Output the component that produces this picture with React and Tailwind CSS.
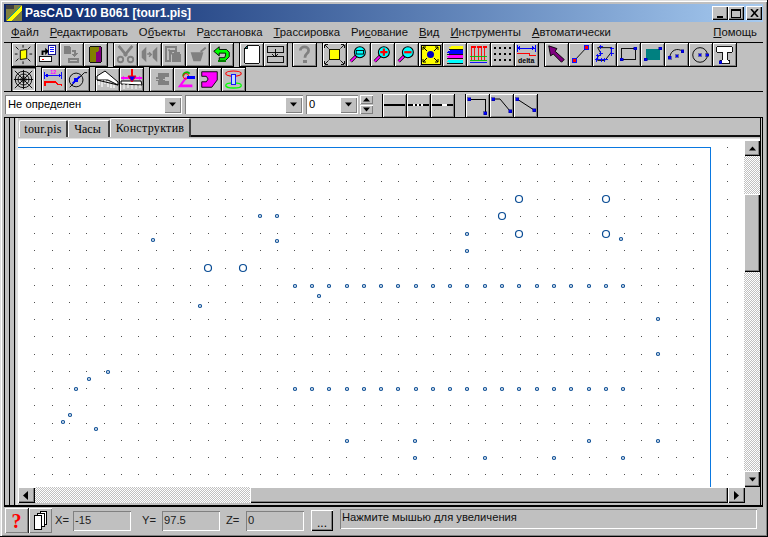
import React from "react";

const S = "shadow-[inset_1px_1px_0_#fff,inset_-1px_-1px_0_#808080]";
const SUNK = "shadow-[inset_1px_1px_0_#808080,inset_-1px_-1px_0_#fff]";
const SANS = "font-['Liberation_Sans',Arial,sans-serif]";
const G = "#808080";

function I({ children, full }) {
  const s = full ? 23 : 21;
  return (
    <svg width={s} height={s} viewBox="0 0 23 23" shapeRendering="crispEdges">
      {children}
    </svg>
  );
}
const Pt = ({ x, y }) => <rect x={x - 1.5} y={y - 1.5} width="3" height="3" fill="#0000ff" stroke="#000080" strokeWidth="0.5" />;
const Mag = ({ children }) => (
  <g shapeRendering="auto">
    <path d="M3 19 L9 13" stroke="#000" strokeWidth="3.4" />
    <path d="M3 19 L9 13" stroke="#ff00ff" strokeWidth="2" />
    <circle cx="13" cy="9" r="6" fill="#00ffff" stroke="#000" strokeWidth="1.2" />
    {children}
  </g>
);

const icons = {
  sun: (
    <I>
      <path d="M8 7 L15 6 L15 16 L8 17 Z" fill="#ffff00" stroke="#000" shapeRendering="auto" />
      <path d="M11 1v3M11 19v3M2 11h3M18 11h3M3 3l3 3M19 3l-3 3M3 19l3-3M19 19l-3-3" stroke="#000" shapeRendering="auto" />
    </I>
  ),
  exp: (
    <I>
      <path d="M5 12 V7 H9 V4 L13 8 L9 12 V9 H7 V12 Z" fill="#000" shapeRendering="auto" />
      <rect x="13" y="2" width="7" height="9" fill="#fff" stroke="#000080" />
      <path d="M14 4h5M14 6h5M14 8h5" stroke="#0000ff" />
      <rect x="3" y="14" width="13" height="5" fill="#fff" stroke="#000" />
      <rect x="5" y="16" width="3" height="2" fill="#ff0000" />
    </I>
  ),
  imp: (
    <I>
      <path d="M3 2 H9 L11 4 V11 H3 Z" fill={G} />
      <path d="M12 7 H16 V10 H19 L15 14 L12 11 H14 V9 H12 Z" fill={G} />
      <rect x="8" y="15" width="12" height="6" fill={G} />
      <rect x="10" y="17" width="8" height="2" fill="#c0c0c0" />
    </I>
  ),
  door: (
    <I>
      <path d="M5 3 H18 V20 H5 Z" fill="#808000" stroke="#000" />
      <path d="M12 20 V9 L15 8 V3 H18 V20 Z" fill="#800080" />
    </I>
  ),
  cut: (
    <I>
      <path d="M4 2 L13 13 M19 2 L10 13" stroke={G} strokeWidth="3" shapeRendering="auto" />
      <circle cx="6" cy="17" r="3" fill="none" stroke={G} strokeWidth="2" shapeRendering="auto" />
      <circle cx="17" cy="17" r="3" fill="none" stroke={G} strokeWidth="2" shapeRendering="auto" />
    </I>
  ),
  flip: (
    <I>
      <path d="M3 8 L8 3 V20 L3 15 Z M20 3 V20 L15 15 V8 Z" fill={G} shapeRendering="auto" />
      <path d="M9 11 H13 M11 9 L13.5 11.5 L11 14" stroke={G} strokeWidth="1.5" fill="none" shapeRendering="auto" />
    </I>
  ),
  paste: (
    <I>
      <path d="M3 3 H14 V8 H8 V19 H3 Z" fill="none" stroke={G} strokeWidth="2" />
      <path d="M12 9 H18 L20 12 V20 H10 V12 Z" fill={G} />
      <path d="M6 6 L11 12" stroke={G} strokeWidth="2" shapeRendering="auto" />
    </I>
  ),
  pot: (
    <I>
      <path d="M4 9 H18 L15 19 H7 Z" fill={G} shapeRendering="auto" />
      <path d="M14 8 L20 3 L21 5 L16 9 Z" fill={G} shapeRendering="auto" />
    </I>
  ),
  undo: (
    <I>
      <path d="M3 8 L9 3 V6 H17 L20 9 V14 L16 18 H9 V15 H15 L16 12 V10 H9 V13 Z" fill="#00ff00" stroke="#000" shapeRendering="auto" />
      <path d="M8 19 H16" stroke="#008000" strokeWidth="2" />
    </I>
  ),
  page: (
    <I>
      <path d="M7 2 H20 V21 H4 V5 Z" fill="#fff" stroke="#000" />
      <path d="M4 5 L7 2 V5 Z" fill="#008080" stroke="#000" />
    </I>
  ),
  move: (
    <I>
      <rect x="3" y="3" width="17" height="6" fill="none" stroke="#000" />
      <rect x="3" y="14" width="17" height="6" fill="none" stroke="#000" />
      <path d="M11 6 V14 M8 11 L11 14 L14 11" stroke="#000" fill="none" />
    </I>
  ),
  q: (
    <I>
      <path d="M7 7 C7 2 16 2 16 7 C16 11 12 10 12 15" fill="none" stroke={G} strokeWidth="3" shapeRendering="auto" />
      <rect x="10" y="17" width="4" height="4" fill={G} />
    </I>
  ),
  fit: (
    <I>
      <rect x="6" y="6" width="11" height="11" fill="#ffff00" stroke="#000" />
      <path d="M1 1 L5 5 M22 1 L18 5 M1 22 L5 18 M22 22 L18 18" stroke="#000" shapeRendering="auto" />
      <path d="M1 1h3M1 1v3M22 1h-3M22 1v3M1 22h3M1 22v-3M22 22h-3M22 22v-3" stroke="#000" />
    </I>
  ),
  zw: <I><Mag><rect x="9" y="7" width="8" height="4" fill="none" stroke="#000" /></Mag></I>,
  zp: <I><Mag><path d="M9 9 H17 M13 5 V13" stroke="#ff0000" strokeWidth="2.4" /></Mag></I>,
  zm: <I><Mag><path d="M9 9 H17" stroke="#ff0000" strokeWidth="2.4" /></Mag></I>,
  yel: (
    <I full>
      <rect x="2" y="2" width="19" height="19" fill="#ffff00" stroke="#000" />
      <circle cx="11.5" cy="11.5" r="3.5" fill="#0000c0" shapeRendering="auto" />
      <path d="M4 4 L8 8 M19 4 L15 8 M4 19 L8 15 M19 19 L15 15 M4 4h3M4 4v3M19 4h-3M19 4v3M4 19h3M4 19v-3M19 19h-3M19 19v-3" stroke="#000" shapeRendering="auto" />
    </I>
  ),
  lay: (
    <I>
      <path d="M9 2 H21 V6 H9 L5 4 Z" fill="#ffff00" />
      <path d="M7 7 H21 V11 H7 L3 9 Z" fill="#0000ff" />
      <path d="M7 12 H21 V16 H7 L3 14 Z" fill="#ff00ff" />
      <path d="M7 17 H21 V21 H7 L3 19 Z" fill="#00ffff" />
      <path d="M5 6h16M3 11h18M3 16h18M3 21h18" stroke="#000" />
    </I>
  ),
  comb: (
    <I>
      <path d="M3 3h6M10 3h5M16 3h5" stroke="#ff0000" strokeWidth="2" />
      <path d="M4 3v15M7 3v15M12 3v15M15 3v15M18 3v15" stroke="#ff0000" />
      <path d="M2 14h19M2 18h19" stroke="#00c000" />
      <path d="M2 20h19" stroke="#0000ff" />
    </I>
  ),
  dots: (
    <I full>
      {[4, 9, 14, 19].flatMap((x) =>
        [5, 11, 17].map((y) => <rect key={x + "-" + y} x={x - 1} y={y - 1} width="2" height="2" fill="#000" />)
      )}
    </I>
  ),
  delta: (
    <I full>
      <path d="M2 2 V9 M20 2 V9 M2 5 H20" stroke="#0000ff" />
      <path d="M2 5l3-2v4zM20 5l-3-2v4z" fill="#0000ff" />
      <path d="M2 10 H14 V12 H21" fill="none" stroke="#ff0000" />
      <text x="3" y="20" fontSize="7" fontWeight="700" fontFamily="Liberation Sans, sans-serif" fill="#000" shapeRendering="auto">delta</text>
    </I>
  ),
  arrow: (
    <I>
      <path d="M3 2 L12 5 L10 8 L20 17 L17 20 L8 11 L5 13 Z" fill="#800080" stroke="#000" shapeRendering="auto" />
    </I>
  ),
  line: (
    <I>
      <path d="M5 18 L18 4" stroke="#000" shapeRendering="auto" />
      <rect x="3" y="16" width="4" height="4" fill="#ff0000" stroke="#0000ff" />
      <rect x="16" y="2" width="4" height="4" fill="#ff0000" stroke="#0000ff" />
    </I>
  ),
  poly: (
    <I>
      <path d="M4 4 H19 L19 9 L12 18 H4 L4 14 L8 11 Z" fill="none" stroke="#000" shapeRendering="auto" />
      {[[7, 3], [19, 5], [19, 10], [12, 17], [7, 10], [3, 17], [8, 17], [4, 13]].map(([x, y]) => (
        <path key={x + "," + y} d={`M${x - 2} ${y}h5M${x} ${y - 2}v5`} stroke="#0000ff" />
      ))}
    </I>
  ),
  rect: (
    <I>
      <rect x="4" y="5" width="15" height="12" fill="none" stroke="#000" />
      <Pt x={4} y={17} />
      <Pt x={19} y={5} />
    </I>
  ),
  fill: (
    <I>
      <rect x="4" y="5" width="16" height="12" fill="#008080" />
      <Pt x={4} y={17} />
      <Pt x={20} y={5} />
    </I>
  ),
  arc: (
    <I>
      <path d="M4 15 C5 6 13 4 18 8" fill="none" stroke="#000" shapeRendering="auto" />
      <Pt x={4} y={15} />
      <Pt x={18} y={8} />
      <Pt x={12} y={13} />
    </I>
  ),
  circ: (
    <I>
      <circle cx="11" cy="12" r="8" fill="none" stroke="#000" shapeRendering="auto" />
      <Pt x={11} y={12} />
      <Pt x={19} y={12} />
    </I>
  ),
  t: (
    <I>
      <path d="M3 3 H20 V9 H15 V18 H17 V21 H7 V18 H9 V9 H3 Z" fill="#fff" stroke="#000" strokeWidth="1" />
      <Pt x={7} y={20} />
    </I>
  ),
  web: (
    <I>
      <g fill="none" stroke="#000" shapeRendering="auto">
        <circle cx="11.5" cy="11.5" r="3" />
        <circle cx="11.5" cy="11.5" r="6" />
        <circle cx="11.5" cy="11.5" r="9" />
        <path d="M2 2 L21 21 M21 2 L2 21 M11.5 1 V22 M1 11.5 H22" />
      </g>
    </I>
  ),
  dim: (
    <I>
      <path d="M2 3 V11 M20 3 V11 M2 7 H20" stroke="#0000ff" />
      <path d="M2 7l3-2v4zM20 7l-3-2v4z" fill="#0000ff" />
      <text x="8" y="6" fontSize="6" fontWeight="700" fontFamily="Liberation Sans, sans-serif" fill="#ff00ff" shapeRendering="auto">12</text>
      <path d="M2 19 V14 H14 L16 17 H20 V19" fill="none" stroke="#ff0000" strokeWidth="1.6" />
    </I>
  ),
  cdim: (
    <I>
      <g shapeRendering="auto">
        <circle cx="10" cy="12" r="7.5" fill="none" stroke="#000" />
        <path d="M3 20 L19 4 H22" stroke="#000" fill="none" />
        <path d="M6 16 L14 8" stroke="#0000ff" strokeWidth="2" />
      </g>
      <rect x="8" y="10" width="4" height="4" fill="#0000ff" />
    </I>
  ),
  slab: (
    <I full>
      <g shapeRendering="auto">
        <path d="M1 8 L9 3 L22 14 V17 L12 12 L1 12 Z" fill="#fff" stroke="#000" />
        <path d="M3 12 V17 M6 12 V19 M9 12 V16 M12 13 V19 M15 15 V20 M18 16 V20" stroke="#fff" strokeWidth="1.2" />
        <path d="M1 12 L22 17" stroke="#000" />
      </g>
    </I>
  ),
  slab2: (
    <I full>
      <g shapeRendering="auto">
        <path d="M1 13 L21 13 L22 17 L1 16 Z" fill="#fff" stroke="#000" />
        <path d="M4 16 V21 M8 16 V20 M12 17 V21 M16 17 V21 M20 17 V20" stroke="#fff" />
        <path d="M1 10 H22" stroke="#ff00ff" strokeWidth="2" />
        <path d="M1 10l3-2v4zM22 10l-3-2v4z" fill="#ff00ff" />
        <path d="M12 1 V12" stroke="#ff0000" strokeWidth="2" />
        <path d="M8 8 H16 L12 14 Z" fill="#0000ff" stroke="#ff0000" />
      </g>
    </I>
  ),
  rem: (
    <I>
      <path d="M8 4 H20 V9 H15 V13 H20 V18 H8 V13 H4 V9 H8 Z" fill={G} />
      <path d="M3 11 H9 M3 11l2-2v4zM13 11 H20 M20 11l-2-2v4z" stroke="#c0c0c0" fill="#c0c0c0" />
    </I>
  ),
  ang: (
    <I>
      <g shapeRendering="auto">
        <path d="M3 20 L11 9 H14 L8 17 H19 V20 Z" fill="#ff00ff" />
        <path d="M9 8 A4 4 0 0 1 16 5" fill="none" stroke="#00c000" strokeWidth="2" />
        <circle cx="12" cy="8" r="3" fill="none" stroke="#ff0000" />
      </g>
      <rect x="13" y="8" width="9" height="3" fill="#0000ff" />
    </I>
  ),
  mag: (
    <I>
      <path d="M3 3 H20 V12 L14 20 H3 V14 H8 L10 11 L8 8 H3 Z" fill="#ff00ff" stroke="#000" shapeRendering="auto" />
    </I>
  ),
  spool: (
    <I>
      <g shapeRendering="auto">
        <ellipse cx="11.5" cy="5" rx="8.5" ry="2.8" fill="none" stroke="#ff0000" strokeWidth="1.2" />
        <ellipse cx="11.5" cy="18" rx="8.5" ry="2.8" fill="none" stroke="#00ff00" strokeWidth="1.4" />
      </g>
      <rect x="9" y="6" width="5" height="11" fill="#c0e0ff" stroke="#0000ff" />
    </I>
  ),
  ls1: <I full><rect x="1" y="10" width="21" height="2" fill="#000" /></I>,
  ls2: (
    <I full>
      <rect x="1" y="10" width="21" height="2" fill="#000" />
      <path d="M6 10h2v2H6zM10 10h2v2h-2zM14 10h2v2h-2z" fill="#fff" />
    </I>
  ),
  ls3: (
    <I full>
      <rect x="1" y="10" width="21" height="2" fill="#000" />
      <rect x="11" y="10" width="5" height="2" fill="#fff" />
    </I>
  ),
  n1: (
    <I full>
      <path d="M4 5 H19 V20" fill="none" stroke="#000" />
      <Pt x={3} y={5} />
      <Pt x={19} y={19} />
    </I>
  ),
  n2: (
    <I full>
      <path d="M3 5 H10 L20 17" fill="none" stroke="#000" shapeRendering="auto" />
      <Pt x={3} y={5} />
      <Pt x={20} y={17} />
    </I>
  ),
  n3: (
    <I full>
      <path d="M3 5 L20 16" fill="none" stroke="#000" shapeRendering="auto" />
      <Pt x={3} y={5} />
      <Pt x={20} y={16} />
    </I>
  ),
};

function Btn({ n, sunk }) {
  return (
    <div className={`w-[23px] h-[23px] flex items-center justify-center ${sunk ? "bg-[#c8c8c8] " + SUNK : "bg-[#c0c0c0] " + S}`}>
      {icons[n]}
    </div>
  );
}

function Group({ items, ml, first, last }) {
  return (
    <div
      className={`flex gap-px bg-black px-px ${first ? "" : "pt-px"} ${last ? "" : "pb-px"}`}
      style={{ marginLeft: ml }}
    >
      {items.map((n) => (
        <Btn key={n} n={n} sunk={n === "web"} />
      ))}
    </div>
  );
}

const menu = [
  ["", "Ф", "айл"],
  ["", "Р", "едактировать"],
  ["О", "б", "ъекты"],
  ["Р", "а", "сстановка"],
  ["", "Т", "рассировка"],
  ["Ри", "с", "ование"],
  ["", "В", "ид"],
  ["", "И", "нструменты"],
  ["", "А", "втоматически"],
];

function Arrow({ dir }) {
  if (dir === "up" || dir === "down") {
    return (
      <svg width="9" height="5" viewBox="0 0 9 5" className="mx-auto">
        <path d={dir === "down" ? "M1 0.5 H8 L4.5 4.5 Z" : "M1 4.5 H8 L4.5 0.5 Z"} fill="#000" />
      </svg>
    );
  }
  return (
    <svg width="9" height="9" viewBox="0 0 9 9" className="mx-auto">
      <path d={dir === "left" ? "M6 0 V9 L1 4.5 Z" : "M2 0 V9 L7 4.5 Z"} fill="#000" />
    </svg>
  );
}

function Combo({ w, text, ml }) {
  return (
    <div className={`h-[19px] flex bg-white ${SUNK} items-center pl-[3px] pr-px text-[11.2px] text-black`} style={{ width: w, marginLeft: ml }}>
      <span className="flex-1 truncate">{text}</span>
      <div className={`w-[17px] h-[16px] bg-[#c0c0c0] flex items-center ${S}`}>
        <Arrow dir="down" />
      </div>
    </div>
  );
}

function Tab({ children, active }) {
  return (
    <div
      className={`font-['Liberation_Serif',serif] text-black text-[12px] leading-none flex items-center justify-center border-t border-l border-t-white border-l-white border-r-2 border-r-[#404040] rounded-t-[2px] bg-[#c0c0c0] ${
        active ? "h-[19px] w-[81px] pb-[1px] tracking-[0.3px]" : "h-[17px] w-[49px] tracking-[0.2px]"
      }`}
    >
      {children}
    </div>
  );
}

const rowX = [295, 312, 329, 347, 364, 381, 398, 416, 433, 450, 467, 485, 502, 519, 537, 554, 571, 589, 606, 623];
const small = [
  [260, 216], [277, 216], [277, 241], [153, 240], [467, 234], [467, 251], [621, 239], [200, 306], [319, 296],
  [658, 319], [658, 354], [108, 372], [89, 379], [76, 389], [70, 415], [63, 422], [96, 429],
  [347, 441], [415, 441], [589, 441], [658, 441], [415, 458], [485, 458], [554, 458], [623, 458],
  ...rowX.map((x) => [x, 286]),
  ...rowX.map((x) => [x, 389]),
];
const large = [[519, 199], [502, 216], [519, 234], [606, 199], [606, 234], [208, 268], [243, 268]];

function Canvas() {
  const dots = [];
  for (let i = 0; i <= 40; i++) {
    for (let j = 0; j <= 19; j++) {
      dots.push([Math.round(34.3 + 17.33 * i), Math.round(147 + 17.22 * j)]);
    }
  }
  return (
    <svg width="726" height="348" viewBox="18 139 726 348" className="block">
      <g shapeRendering="crispEdges">
        {dots.map(([x, y]) => (
          <rect key={x + "_" + y} x={x} y={y} width="1" height="1" fill="#505050" />
        ))}
        <path d="M18 147.5 H710.5 V487" fill="none" stroke="#0a78e0" />
      </g>
      <g fill="#fff" stroke="#0a4c94" strokeWidth="1.2">
        {small.map(([x, y]) => (
          <circle key={x + "s" + y} cx={x} cy={y} r="1.5" />
        ))}
        {large.map(([x, y]) => (
          <circle key={x + "l" + y} cx={x} cy={y} r="3.5" />
        ))}
      </g>
    </svg>
  );
}

const CHECK = "bg-[repeating-conic-gradient(#c0c0c0_0_25%,#ffffff_0_50%)] bg-[length:2px_2px]";
const SB = `bg-[#c0c0c0] shadow-[inset_1px_1px_0_#fff,inset_-1px_-1px_0_#000,inset_-2px_-2px_0_#808080]`;

function Field({ label, value, lw }) {
  return (
    <div className="flex items-center text-[11.2px] text-[#202020]">
      <span style={{ width: lw }}>{label}</span>
      <div className={`w-[58px] h-[20px] bg-[#c0c0c0] pl-[2px] flex items-center ${SUNK}`}>{value}</div>
    </div>
  );
}

export default function App() {
  return (
    <div className={`${SANS} w-[768px] h-[537px] bg-[#c0c0c0] flex flex-col pt-[4px] pl-[4px] pr-[4px] pb-[2px] border-r border-b border-black overflow-hidden shadow-[inset_1px_1px_0_#dfdfdf,inset_2px_2px_0_#fff,inset_-1px_-1px_0_#808080]`}>
      {/* title */}
      <div className="h-[18px] shrink-0 flex items-center bg-gradient-to-r from-[#0a246a] to-[#a6caf0] pl-[2px] pr-px">
        <svg width="16" height="16" viewBox="0 0 16 16" shapeRendering="crispEdges">
          <rect width="16" height="16" fill="#808040" />
          <path d="M0 16 L16 0 V5 L5 16 Z" fill="#ffff00" />
          <path d="M0 0 H8 V4 H0 Z" fill="#404040" />
          <path d="M2 14 L14 2" stroke="#00a0a0" />
        </svg>
        <span className="ml-[3px] text-white font-bold text-[12px] leading-none">PasCAD V10 B061 [tour1.pis]</span>
        <div className="ml-auto flex items-center">
          {[0, 1].map((k) => (
            <div key={k} className={`w-[16px] h-[14px] bg-[#c0c0c0] ${SB} flex items-center justify-center`}>
              {k === 0 ? <div className="w-[6px] h-[2px] bg-black mt-[7px] -ml-[1px]" /> : <div className="w-[10px] h-[9px] border border-black border-t-2" />}
            </div>
          ))}
          <div className={`ml-[2px] w-[16px] h-[14px] ${SB} flex items-center justify-center`}>
            <svg width="9" height="8" viewBox="0 0 9 8">
              <path d="M1 0 L8 8 M8 0 L1 8" stroke="#000" strokeWidth="1.6" />
            </svg>
          </div>
        </div>
      </div>
      {/* menu */}
      <div className="h-[20px] shrink-0 flex items-center pl-[7px] pr-[6px] gap-[11px] text-[11.3px] text-[#101010]">
        {menu.map(([a, b, c]) => (
          <span key={a + b + c}>
            {a}
            <u>{b}</u>
            {c}
          </span>
        ))}
        <span className="ml-auto">
          <u>П</u>омощь
        </span>
      </div>
      {/* toolbars */}
      <div className="h-[50px] shrink-0 border-t border-b border-black flex flex-col pl-[7px]">
        <div className="flex h-[24px]">
          <Group first ml={0} items={["sun", "exp", "imp", "door"]} />
          <Group first ml={5} items={["cut", "flip", "paste", "pot", "undo"]} />
          <Group first ml={5} items={["page", "move"]} />
          <Group first ml={4} items={["q"]} />
          <Group first ml={5} items={["fit", "zw", "zp", "zm", "yel", "lay", "comb", "dots", "delta"]} />
          <Group first ml={5} items={["arrow", "line", "poly", "rect", "fill", "arc", "circ", "t"]} />
        </div>
        <div className="flex h-[24px]">
          <Group last ml={0} items={["web"]} />
          <Group last ml={5} items={["dim", "cdim"]} />
          <Group last ml={5} items={["slab", "slab2"]} />
          <Group last ml={5} items={["rem", "ang", "mag", "spool"]} />
        </div>
      </div>
      {/* combos */}
      <div className="h-[26px] shrink-0 border-b border-black flex items-center pl-[1px]">
        <Combo w={177} text="Не определен" />
        <Combo w={118} ml={3} text="" />
        <Combo w={52} ml={3} text="0" />
        <div className="ml-[2px] w-[13px] h-[19px] flex flex-col gap-px">
          <div className={`flex-1 flex items-center ${S}`}><Arrow dir="up" /></div>
          <div className={`flex-1 flex items-center ${S}`}><Arrow dir="down" /></div>
        </div>
        <div className="ml-[9px] self-end">
          <Group last first ml={0} items={["ls1", "ls2", "ls3"]} />
        </div>
        <div className="ml-[10px] self-end">
          <Group last first ml={0} items={["n1", "n2", "n3"]} />
        </div>
      </div>
      {/* body */}
      <div className="flex-1 min-h-0 flex">
        {/* rebars */}
        <div className="w-[14px] shrink-0 flex">
          <div className="w-[5px] border-l border-black" />
          <div className="w-[5px] border-l border-black border-r-0" />
          <div className="w-[4px] border-l border-black border-r-2 border-r-[#e0e0e0]" />
        </div>
        <div className="flex-1 min-w-0 flex flex-col">
          {/* tabs */}
          <div className="h-[19px] shrink-0 flex items-end pl-px">
            <Tab>tour.pis</Tab>
            <div className="h-[17px] w-[42px] border-t border-l border-t-white border-l-white border-r-2 border-r-[#404040] font-['Liberation_Serif',serif] text-[12px] leading-none text-black flex items-center justify-center pr-[2px]">Часы</div>
            <Tab active>Конструктив</Tab>
            <div className="flex-1 h-[2px] bg-[#101010]" />
          </div>
          {/* client */}
          <div className="mt-px flex-1 min-h-0 flex flex-col border-t border-[#dfdfdf]">
            <div className="flex">
              <div className="bg-white">
                <Canvas />
              </div>
              <div className="w-[17px] h-[348px] flex flex-col bg-white pt-px">
                <div className={`h-[16px] flex items-center ${SB}`}><Arrow dir="up" /></div>
                <div className={`h-[38px] ${CHECK}`} />
                <div className={`h-[78px] ${SB}`} />
                <div className={`flex-1 ${CHECK}`} />
                <div className={`h-[16px] flex items-center ${SB}`}><Arrow dir="down" /></div>
              </div>
            </div>
            <div className="h-[16px] w-[727px] flex">
              <div className={`w-[17px] flex items-center ${SB}`}><Arrow dir="left" /></div>
              <div className={`w-[215px] ${CHECK}`} />
              <div className={`flex-1 ${SB}`} />
              <div className={`w-[17px] flex items-center ${SB}`}><Arrow dir="right" /></div>
            </div>
          </div>
        </div>
        <div className="w-[3px] shrink-0 border-r border-black border-l border-l-black" />
      </div>
      {/* status */}
      <div className="h-[29px] shrink-0 border-t-2 border-black flex items-center pl-[1px] pr-[6px] text-[11.2px] relative">
        <div className="flex gap-px bg-[#202020] h-[25px]">
          <div className={`w-[23px] bg-[#c0c0c0] flex items-center justify-center ${S}`}>
            <span className="text-[#ff0000] font-['Liberation_Serif',serif] font-bold text-[20px] leading-none">?</span>
          </div>
          <div className={`w-[23px] bg-[#c0c0c0] flex items-center justify-center ${S}`}>
            <svg width="17" height="19" viewBox="0 0 17 19" shapeRendering="crispEdges">
              <path d="M8.5 .5 H14.5 V13.5 H8.5 Z" fill="#fff" stroke="#000" />
              <path d="M5.5 2.5 H12.5 V15.5 H5.5 Z" fill="#fff" stroke="#000" />
              <path d="M2.5 4.5 H9.5 V18.5 H2.5 Z" fill="#fff" stroke="#000" />
            </svg>
          </div>
        </div>
        <div className="ml-[3px] flex items-center">
          <Field label="X=" value="-15" lw={18} />
          <div className="ml-[11px]"><Field label="Y=" value="97.5" lw={20} /></div>
          <div className="ml-[6px]"><Field label="Z=" value="0" lw={20} /></div>
        </div>
        <div className={`ml-[7px] w-[22px] h-[21px] bg-[#c0c0c0] flex items-end justify-center pb-[2px] leading-none text-[12px] ${SB}`}>...</div>
        <div className={`ml-[7px] flex-1 h-[20px] -mt-[3px] pl-[2px] pb-[3px] flex items-center text-[#101010] ${SUNK}`}>Нажмите мышью для увеличения</div>
      </div>
    </div>
  );
}
